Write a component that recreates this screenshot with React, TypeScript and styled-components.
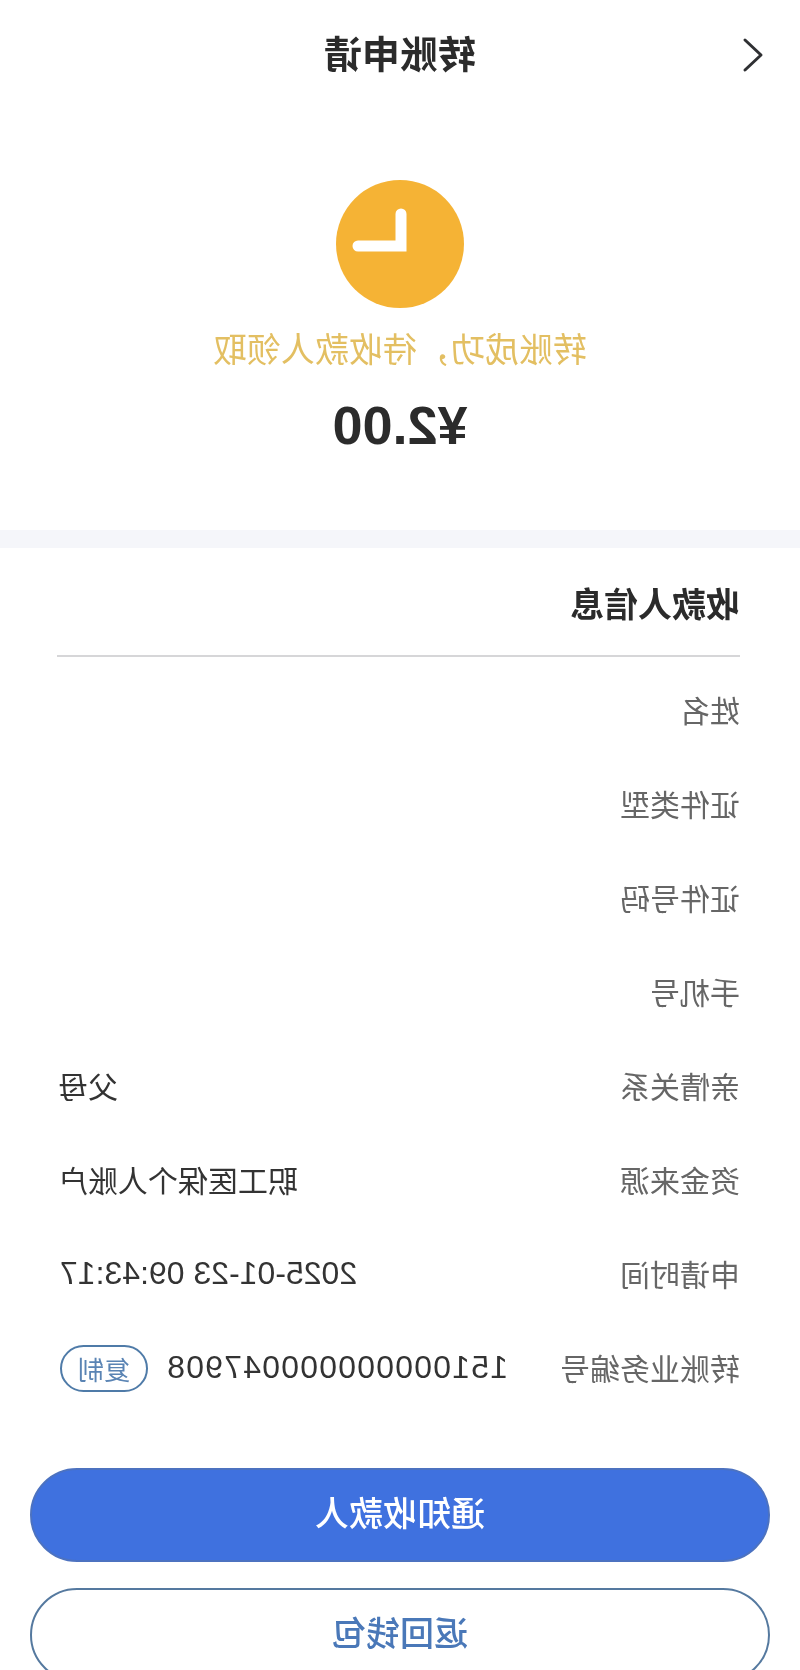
import styled, { createGlobalStyle } from 'styled-components'

const cjk = '"Noto Sans CJK SC", "Noto Sans", sans-serif'
const latin = '"Liberation Sans", "Noto Sans CJK SC", sans-serif'

const GlobalStyle = createGlobalStyle`
  html, body {
    margin: 0;
    padding: 0;
    background: #fff;
  }
  * {
    box-sizing: border-box;
  }
`

// the reference is a horizontally mirrored, slightly soft capture,
// so the whole page is flipped and gets a touch of blur
const Page = styled.div`
  width: 800px;
  height: 1670px;
  overflow: hidden;
  background: #fff;
  font-family: ${cjk};
  transform: scaleX(-1);
  filter: blur(0.4px);
`

const Header = styled.header`
  display: grid;
  grid-template-columns: 1fr auto 1fr;
  align-items: center;
  height: 106px;
  padding: 0 36px;
`

const Back = styled.svg`
  display: block;
  width: 22px;
  height: 36px;
  margin-top: 4px;
  fill: none;
  stroke: #2f3033;
  stroke-width: 3;
  stroke-linecap: round;
  stroke-linejoin: round;
`

const Title = styled.h1`
  margin: 0 0 2px;
  font-size: 38px;
  line-height: 50px;
  font-weight: 700;
  color: #2b2b2b;
`

const Hero = styled.section`
  display: flex;
  flex-direction: column;
  align-items: center;
  height: 424px;
  padding-top: 74px;
`

const Clock = styled.svg`
  display: block;
  width: 128px;
  height: 128px;
`

const Status = styled.div`
  margin-top: 22px;
  font-size: 34px;
  line-height: 36px;
  color: #e3bf62;
`

const Amount = styled.div`
  margin-top: 29px;
  font-family: ${latin};
  font-size: 54px;
  line-height: 60px;
  font-weight: 700;
  color: #2b2b2b;
`

const Band = styled.div`
  height: 18px;
  background: #f5f6fa;
`

const Section = styled.section`
  padding: 0 57px 0 60px;
`

const SectionTitle = styled.h2`
  margin: 0;
  height: 109px;
  padding-top: 31px;
  border-bottom: 2px solid #d6d6d8;
  font-size: 34px;
  line-height: 48px;
  font-weight: 700;
  color: #2b2b2b;
`

const Rows = styled.div`
  padding-top: 5px;
  padding-right: 3px;
`

const Row = styled.div`
  display: flex;
  justify-content: space-between;
  align-items: center;
  height: 94px;
`

const Label = styled.span`
  font-size: 30px;
  color: #666;
`

const Value = styled.span`
  display: flex;
  align-items: center;
  gap: 18px;
  color: #333;
`

const ValueText = styled.span`
  margin-right: -2px;
  font-size: 30px;
`

const Digits = styled.span<{ $spacing?: number }>`
  font-family: ${latin};
  font-size: 32px;
  letter-spacing: ${p => p.$spacing ?? 0}px;
`

const CopyPill = styled.span`
  display: flex;
  align-items: center;
  justify-content: center;
  width: 88px;
  height: 47px;
  margin-top: 2px;
  border: 2px solid #4f7ba8;
  border-radius: 24px;
  font-size: 26px;
  color: #5a84b4;
`

const Actions = styled.div`
  display: flex;
  flex-direction: column;
  gap: 26px;
  width: 740px;
  margin: 54px 0 0 30px;
`

const Button = styled.div<{ $primary?: boolean }>`
  display: flex;
  align-items: center;
  justify-content: center;
  flex: none;
  height: 94px;
  padding-bottom: 7px;
  border-radius: 47px;
  border: 2px solid ${p => (p.$primary ? '#4c72c0' : '#55799f')};
  background: ${p => (p.$primary ? '#3f71df' : '#fff')};
  color: ${p => (p.$primary ? '#fff' : '#4a78b8')};
  font-size: 34px;
  font-weight: 500;
`

const details = [
  { label: '姓名', value: '' },
  { label: '证件类型', value: '' },
  { label: '证件号码', value: '' },
  { label: '手机号', value: '' },
  { label: '亲情关系', value: '父母' },
  { label: '资金来源', value: '职工医保个人账户' },
]

export default function App() {
  return (
    <Page>
      <GlobalStyle />
      <Header>
        <Back viewBox="0 0 22 36">
          <path d="M19 3 3 18l16 15" />
        </Back>
        <Title>转账申请</Title>
      </Header>

      <Hero>
        <Clock viewBox="0 0 128 128">
          <circle cx="64" cy="64" r="64" fill="#f5b335" />
          <path
            d="M63 34v32h43"
            fill="none"
            stroke="#fff"
            strokeWidth="11"
            strokeLinecap="round"
            strokeLinejoin="miter"
          />
        </Clock>
        <Status>转账成功，待收款人领取</Status>
        <Amount>¥2.00</Amount>
      </Hero>

      <Band />

      <Section>
        <SectionTitle>收款人信息</SectionTitle>
        <Rows>
          {details.map(d => (
            <Row key={d.label}>
              <Label>{d.label}</Label>
              <Value>{d.value && <ValueText>{d.value}</ValueText>}</Value>
            </Row>
          ))}
          <Row>
            <Label>申请时间</Label>
            <Value>
              <Digits>2025-01-23 09:43:17</Digits>
            </Value>
          </Row>
          <Row>
            <Label>转账业务编号</Label>
            <Value>
              <Digits $spacing={1.2}>151000000000047908</Digits>
              <CopyPill>复制</CopyPill>
            </Value>
          </Row>
        </Rows>
      </Section>

      <Actions>
        <Button $primary>通知收款人</Button>
        <Button>返回钱包</Button>
      </Actions>
    </Page>
  )
}
